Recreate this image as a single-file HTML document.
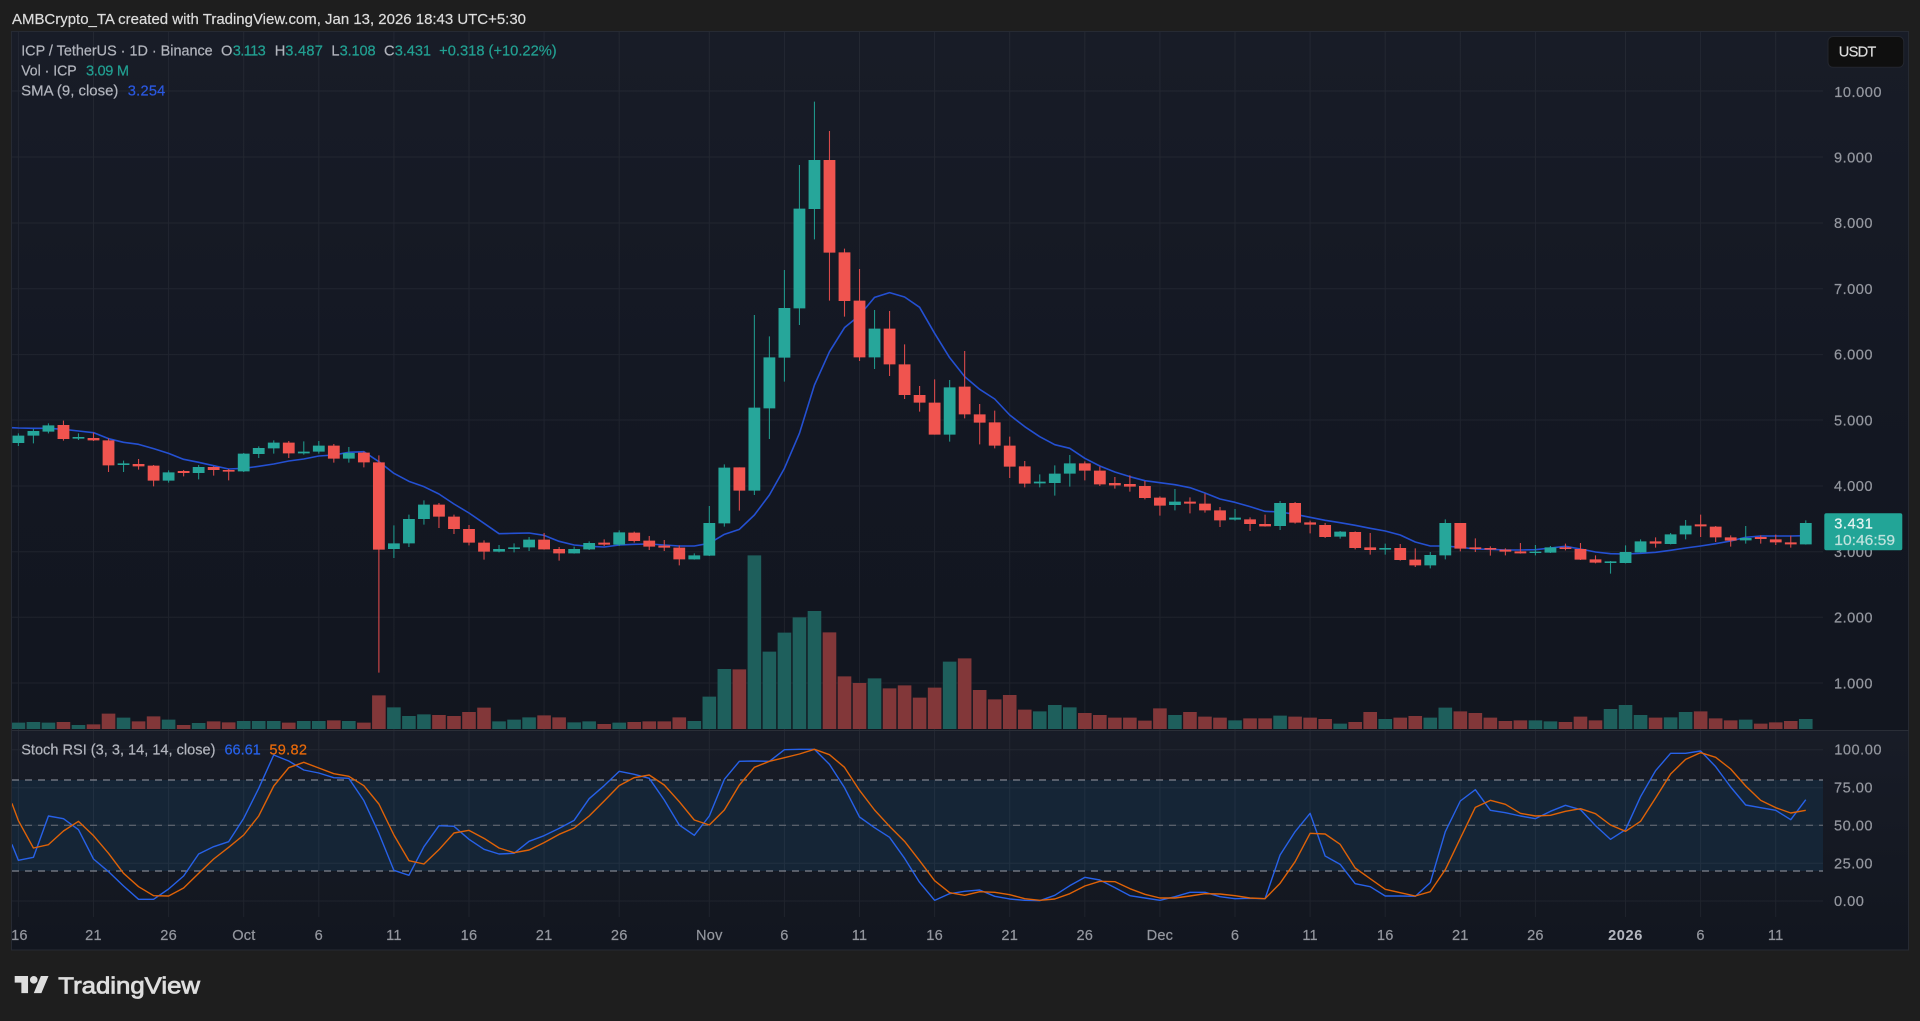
<!DOCTYPE html>
<html lang="en"><head><meta charset="utf-8"><title>ICP / TetherUS chart</title>
<style>
html,body{margin:0;padding:0;background:#1e1e1e;width:1920px;height:1021px;overflow:hidden}
svg{display:block;filter:blur(.35px)}
text{font-family:"Liberation Sans",sans-serif;font-size:14.6px;stroke-width:.2px}
.l{fill:#b2b5bd;stroke:#b2b5bd}.g{fill:#22a092;stroke:#22a092}.ax{fill:#94979f;stroke:#94979f;letter-spacing:.5px}.t{fill:#94979f;stroke:#94979f;text-anchor:middle;letter-spacing:.2px}
.n{fill:none;vector-effect:non-scaling-stroke}
</style></head><body>
<svg xmlns="http://www.w3.org/2000/svg" width="1920" height="1021" viewBox="0 0 1920 1021">
<defs>
<linearGradient id="a" x1="0" y1="0" x2="0" y2="1"><stop offset="0" stop-color="#181c27"/><stop offset=".6" stop-color="#131722"/><stop offset="1" stop-color="#12161f"/></linearGradient>
<linearGradient id="b" x1="0" y1="0" x2="0" y2="1"><stop offset="0" stop-color="#181c27"/><stop offset="1" stop-color="#12161f"/></linearGradient>
<clipPath id="c"><rect x="12" y="32" width="1811" height="885"/></clipPath>
</defs>
<rect width="1920" height="1021" fill="#1e1e1e"/>
<rect x="12" y="32" width="1897" height="698" fill="url(#a)"/>
<rect x="12" y="730" width="1897" height="220" fill="url(#b)"/>
<rect x="12" y="780" width="1811" height="91" fill="#152536"/>
<path d="M18.4 32V917M93.5 32V917M168.6 32V917M243.7 32V917M318.8 32V917M393.9 32V917M469 32V917M544.1 32V917M619.2 32V917M709.3 32V917M784.4 32V917M859.5 32V917M934.6 32V917M1009.7 32V917M1084.8 32V917M1159.9 32V917M1235 32V917M1310.1 32V917M1385.2 32V917M1460.3 32V917M1535.4 32V917M1625.5 32V917M1700.6 32V917M1775.7 32V917M12 91H1823M12 157H1823M12 223H1823M12 288.8H1823M12 354.6H1823M12 420H1823M12 486H1823M12 551.7H1823M12 617.3H1823M12 683H1823M12 749.7H1823M12 787.7H1823M12 825.3H1823M12 863.3H1823M12 901H1823" stroke="#fff" stroke-opacity=".055" fill="none"/>
<path d="M12 780H1823M12 871H1823" stroke="#80848e" stroke-width="1.2" stroke-dasharray="7 6" fill="none"/>
<path d="M12 825.3H1823" stroke="#6d717b" stroke-width="1" stroke-dasharray="7 6" fill="none"/>

<g clip-path="url(#c)">
<!-- volume -->
<g transform="translate(18.4,400) scale(15.02,.33333)">
<path class="n" stroke="#1e5f5c" stroke-width="13.6" d="M0 968V987M1 966V987M2 968V987M4 975V987M7 953V987M10 959V987M12 969V987M15 963V987M16 963V987M17 963V987M19 963V987M20 963V987M22 963V987M25 922V987M26 948V987M27 943V987M32 964V987M33 959V987M34 952V987M37 967V987M38 964V987M40 968V987M45 963V987M46 890V987M47 807V987M49 466V987M50 755V987M51 698V987M52 652V987M53 633V987M57 835V987M62 785V987M68 934V987M69 915V987M70 922V987M77 945V987M81 961V987M84 947V987M88 971V987M91 957V987M94 953V987M95 923V987M101 961V987M102 964V987M106 927V987M107 915V987M108 945V987M110 952V987M111 936V987M115 959V987M119 957V987"/>
<path class="n" stroke="#823739" stroke-width="13.6" d="M3 966V987M5 973V987M6 941V987M8 964V987M9 949V987M11 975V987M13 964V987M14 967V987M18 968V987M21 961V987M23 968V987M24 886V987M28 945V987M29 948V987M30 936V987M31 923V987M35 946V987M36 952V987M39 972V987M41 966V987M42 964V987M43 964V987M44 952V987M48 808V987M54 697V987M55 829V987M56 849V987M58 865V987M59 856V987M60 893V987M61 863V987M63 775V987M64 870V987M65 898V987M66 885V987M67 929V987M71 939V987M72 945V987M73 953V987M74 953V987M75 962V987M76 925V987M78 936V987M79 950V987M80 953V987M82 955V987M83 955V987M85 950V987M86 953V987M87 957V987M89 966V987M90 936V987M92 953V987M93 948V987M96 934V987M97 939V987M98 953V987M99 963V987M100 961V987M103 966V987M104 950V987M105 961V987M109 953V987M112 934V987M113 955V987M114 961V987M116 971V987M117 967V987M118 963V987"/>
<!-- SMA -->
<path class="n" stroke="#2450d2" stroke-width="1.6" stroke-linejoin="round" d="M-.43 83L0 84 1 85 2 85 3 88 4 93 5 98 6 116 7 127 8 133 9 146 10 160 11 178 12 187 13 197 14 207 15 205 16 199 17 192 18 183 19 177 20 168 21 165 22 157 23 155 24 185 25 220 26 244 27 260 28 282 29 312 30 339 31 370 32 401 33 400 34 399 35 406 36 424 37 435 38 439 39 441 40 435 41 433 42 432 43 435 44 438 45 438 46 430 47 403 48 388 49 345 50 285 51 205 52 100 53 -45 54 -145 55 -217 56 -254 57 -308 58 -322 59 -309 60 -278 61 -200 62 -127 63 -70 64 -32 65 -3 66 45 67 80 68 110 69 134 70 145 71 175 72 198 73 216 74 230 75 242 76 248 77 254 78 263 79 279 80 297 81 307 82 320 83 334 84 336 85 343 86 352 87 361 88 368 89 376 90 385 91 393 92 405 93 426 94 438 95 438 96 442 97 447 98 448 99 450 100 450 101 449 102 444 103 439 104 447 105 456 106 461 107 462 108 460 109 457 110 451 111 444 112 438 113 431 114 423 115 412 116 408 117 408 118 408 119 407"/>
<!-- wicks -->
<path class="n" stroke="#1f9488" stroke-width="1.1" d="M0 100V138M1 87V130M2 70V100M4 100V120M7 182V216M10 211V248M12 195V238M15 159V216M16 139V174M17 121V161M19 124V164M20 123V161M22 141V188M25 376V474M26 344V441M27 301V374M32 435V457M33 430V457M34 411V453M37 440V461M38 424V450M40 391V438M45 460V479M46 318V468M47 193V380M49 -255V285M50 -191V117M51 -390V-55M52 -705V-225M53 -895V-482M57 -270V-93M62 -60V125M68 223V262M69 196V287M70 165V260M77 267V331M81 327V362M84 303V390M88 393V416M91 431V464M94 456V505M95 358V478M101 435V466M102 438V459M106 483V521M107 436V490M108 418V458M110 399V433M111 360V418M115 378V431M119 361V434"/>
<path class="n" stroke="#d8494a" stroke-width="1.1" d="M3 62V122M5 98V123M6 115V216M8 177V209M9 195V259M11 210V229M13 199V227M14 207V241M18 123V174M21 132V188M23 155V202M24 166V818M28 309V384M29 344V402M30 375V436M31 421V479M35 399V449M36 441V482M39 418V438M41 395V428M42 408V450M43 420V453M44 436V496M48 202V332M54 -807V-298M55 -454V-250M56 -393V-117M58 -267V-72M59 -167V-3M60 -42V35M61 -62V104M63 -147V55M64 12V133M65 32V145M66 110V234M67 183V262M71 184V241M72 200V258M73 231V266M74 226V275M75 243V298M76 289V347M78 292V340M79 281V338M80 321V381M82 352V393M83 344V380M85 306V371M86 362V400M87 369V414M89 394V448M90 399V464M92 432V482M93 445V501M96 369V454M97 415V456M98 439V467M99 445V466M100 429V461M103 431V451M104 429V480M105 466V490M109 412V443M112 344V411M113 378V426M114 406V440M116 406V431M117 404V435M118 407V443"/>
<!-- bodies -->
<path class="n" stroke="#26a69a" stroke-width="11.8" d="M0 107V129M1 93V107M2 76V95M4 111V116M7 190V195M10 217V242M12 201V219M15 161V214M16 144V162M17 128V145M19 155V160M20 137V155M22 159V176M25 430V447M26 357V430M27 314V357M32 447V455M33 442V447M34 419V442M37 447V460M38 429V448M40 397V434M45 466V478M46 369V467M47 203V370M49 23V272M50 -128V25M51 -276V-127M52 -574V-275M53 -720V-573M57 -214V-128M62 -38V104M68 245V250M69 221V249M70 190V221M77 305V315M81 353V359M84 309V378M88 395V410M91 444V449M94 465V496M95 369V466M101 455V459M102 442V458M106 484V489M107 456V489M108 424V457M110 403V432M111 377V403M115 414V421M119 369V433"/>
<path class="n" stroke="#f0544f" stroke-width="11.8" d="M3 75V117M5 114V121M6 121V196M8 192V199M9 197V242M11 213V219M13 201V210M14 210V215M18 128V160M21 137V176M23 158V187M24 187V449M28 314V350M29 350V387M30 387V428M31 428V455M35 419V448M36 447V460M39 428V434M41 398V423M42 422V440M43 437V443M44 443V478M48 202V272M54 -720V-442M55 -443V-297M56 -298V-128M58 -214V-107M59 -107V-15M60 -15V8M61 8V104M63 -40V43M64 43V68M65 67V137M66 137V200M67 199V251M71 190V212M72 212V253M73 249V256M74 252V260M75 258V294M76 293V317M78 305V311M79 311V331M80 331V361M82 358V372M83 372V379M85 309V368M86 367V374M87 375V411M89 396V444M90 442V450M92 444V480M93 479V496M96 369V446M97 442V447M98 444V449M99 449V455M100 454V460M103 442V447M104 447V479M105 478V488M109 424V431M112 373V379M113 380V412M114 412V422M116 411V417M117 418V427M118 427V433"/>
</g>
<!-- Stoch RSI -->
<g transform="translate(18.4,720) scale(15.02,.33333)">
<path class="n" stroke="#2761e8" stroke-width="1.4" stroke-linejoin="round" d="M-.43 373L0 421 1 412 2 288 3 296 4 329 5 417 6 455 7 498 8 538 9 538 10 507 11 468 12 402 13 380 14 365 15 295 16 205 17 105 18 123 19 150 20 159 21 173 22 175 23 242 24 340 25 451 26 466 27 380 28 317 29 319 30 358 31 388 32 402 33 400 34 364 35 347 36 325 37 301 38 236 39 197 40 154 41 163 42 175 43 240 44 315 45 346 46 288 47 178 48 124 49 123 50 124 51 89 52 88 53 88 54 133 55 203 56 291 57 323 58 352 59 415 60 487 61 541 62 521 63 514 64 510 65 529 66 537 67 541 68 542 69 526 70 497 71 472 72 480 73 503 74 527 75 534 76 541 77 530 78 517 79 517 80 530 81 536 82 535 83 536 84 405 85 335 86 280 87 408 88 433 89 491 90 500 91 528 92 528 93 529 94 488 95 335 96 243 97 209 98 271 99 278 100 288 101 296 102 274 103 256 104 269 105 317 106 358 107 329 108 230 109 152 110 100 111 100 112 93 113 140 114 201 115 255 116 263 117 271 118 299 119 239"/>
<path class="n" stroke="#df6207" stroke-width="1.4" stroke-linejoin="round" d="M-.43 250L0 302 1 384 2 374 3 333 4 304 5 347 6 400 7 460 8 500 9 527 10 528 11 504 12 460 13 417 14 382 15 345 16 288 17 198 18 143 19 127 20 144 21 161 22 169 23 197 24 252 25 345 26 422 27 432 28 389 29 339 30 331 31 355 32 384 33 398 34 390 35 368 36 343 37 324 38 288 39 243 40 197 41 173 42 165 43 195 44 245 45 300 46 315 47 270 48 195 49 142 50 124 51 113 52 102 53 88 54 104 55 142 56 211 57 270 58 319 59 364 60 422 61 482 62 518 63 526 64 515 65 517 66 524 67 536 68 541 69 537 70 521 71 498 72 484 73 485 74 506 75 523 76 534 77 534 78 528 79 521 80 522 81 527 82 534 83 536 84 490 85 425 86 340 87 342 88 373 89 444 90 476 91 508 92 518 93 528 94 515 95 449 96 355 97 262 98 241 99 253 100 280 101 288 102 286 103 274 104 266 105 281 106 315 107 334 108 304 109 234 110 162 111 118 112 98 113 112 114 147 115 198 116 241 117 263 118 279 119 271"/>
</g>
</g>

<!-- frame -->
<rect x="11.5" y="31.5" width="1897" height="918.5" fill="none" stroke="#262a33"/>
<path d="M12 730.5H1909" stroke="#2a2e37"/>

<!-- header -->
<text x="12" y="24" fill="#dcdcdc" stroke="#dcdcdc" textLength="514" lengthAdjust="spacingAndGlyphs" style="font-size:15px">AMBCrypto_TA created with TradingView.com, Jan 13, 2026 18:43 UTC+5:30</text>

<!-- legend -->
<text class="l" x="21.2" y="55.5" textLength="191.5" lengthAdjust="spacingAndGlyphs">ICP / TetherUS · 1D · Binance</text>
<text class="l" x="221" y="55.5">O</text><text class="g" x="232.7" y="55.5" textLength="33">3.113</text>
<text class="l" x="274.7" y="55.5">H</text><text class="g" x="285.3" y="55.5" textLength="37.6">3.487</text>
<text class="l" x="331.4" y="55.5">L</text><text class="g" x="339.6" y="55.5" textLength="36">3.108</text>
<text class="l" x="384" y="55.5">C</text><text class="g" x="394.7" y="55.5" textLength="36.3">3.431</text>
<text class="g" x="439.2" y="55.5" textLength="117.5" lengthAdjust="spacingAndGlyphs">+0.318 (+10.22%)</text>
<text class="l" x="21.2" y="75.5" textLength="55.5" lengthAdjust="spacingAndGlyphs">Vol · ICP</text><text class="g" x="86" y="75.5" textLength="43">3.09 M</text>
<text class="l" x="21.2" y="95.5" textLength="97.2" lengthAdjust="spacingAndGlyphs">SMA (9, close)</text><text x="127.8" y="95.5" fill="#2a58e0" stroke="#2a58e0" textLength="37.5">3.254</text>
<text class="l" x="21.2" y="754.5" textLength="194.3" lengthAdjust="spacingAndGlyphs">Stoch RSI (3, 3, 14, 14, close)</text>
<text x="224.5" y="754.5" fill="#2761e8" stroke="#2761e8" textLength="36.3">66.61</text><text x="269.4" y="754.5" fill="#e8690a" stroke="#e8690a" textLength="37.6">59.82</text>

<!-- USDT button -->
<rect x="1828" y="36.5" width="75.7" height="30.8" rx="5" fill="#0f0f0f" stroke="#23262e"/>
<text x="1838.8" y="56.5" fill="#dcdcdc" stroke="#dcdcdc" textLength="37.5">USDT</text>

<!-- price axis -->
<text class="ax" x="1834.3" y="97">10.000</text>
<text class="ax" x="1834" y="162.5">9.000</text>
<text class="ax" x="1834" y="228">8.000</text>
<text class="ax" x="1834" y="294">7.000</text>
<text class="ax" x="1834" y="359.5">6.000</text>
<text class="ax" x="1834" y="425.5">5.000</text>
<text class="ax" x="1834" y="491">4.000</text>
<text class="ax" x="1834" y="557">3.000</text>
<text class="ax" x="1834" y="622.7">2.000</text>
<text class="ax" x="1834" y="688.5">1.000</text>
<text class="ax" x="1834.3" y="754.7">100.00</text>
<text class="ax" x="1834" y="792.7">75.00</text>
<text class="ax" x="1834" y="830.5">50.00</text>
<text class="ax" x="1834" y="868.5">25.00</text>
<text class="ax" x="1834" y="906">0.00</text>

<!-- price tag -->
<rect x="1824.3" y="513.3" width="78" height="37" rx="2" fill="#22a597"/>
<text x="1834.3" y="528.5" fill="#e6f4f2" stroke="#e6f4f2" letter-spacing=".5">3.431</text>
<text x="1834.3" y="545" fill="#bfe2dd" stroke="#bfe2dd" textLength="60.7" lengthAdjust="spacingAndGlyphs">10:46:59</text>

<!-- time axis -->
<text class="t" x="19.4" y="940">16</text><text class="t" x="93.5" y="940">21</text><text class="t" x="168.6" y="940">26</text><text class="t" x="243.9" y="940">Oct</text><text class="t" x="318.8" y="940">6</text><text class="t" x="393.9" y="940">11</text><text class="t" x="469" y="940">16</text><text class="t" x="544.1" y="940">21</text><text class="t" x="619.2" y="940">26</text><text class="t" x="709.3" y="940">Nov</text><text class="t" x="784.4" y="940">6</text><text class="t" x="859.5" y="940">11</text><text class="t" x="934.6" y="940">16</text><text class="t" x="1009.7" y="940">21</text><text class="t" x="1084.8" y="940">26</text><text class="t" x="1159.9" y="940">Dec</text><text class="t" x="1235" y="940">6</text><text class="t" x="1310.1" y="940">11</text><text class="t" x="1385.2" y="940">16</text><text class="t" x="1460.3" y="940">21</text><text class="t" x="1535.4" y="940">26</text><text class="t" x="1625.5" y="940" font-weight="bold" style="fill:#b4b7bf;stroke:none;letter-spacing:.6px">2026</text><text class="t" x="1700.6" y="940">6</text><text class="t" x="1775.7" y="940">11</text>

<!-- logo -->
<g transform="translate(14.7,972.2) scale(.953)" fill="#dedede"><path d="M14 22H7V11H0V4h14v18zM28 22h-8l7.5-18h8L28 22z"/><circle cx="20" cy="8" r="4"/></g>
<text x="58.3" y="993.3" fill="#dedede" stroke="#dedede" style="font-size:23.5px;stroke-width:.8px" textLength="141.7" lengthAdjust="spacingAndGlyphs">TradingView</text>
</svg>
</body></html>
